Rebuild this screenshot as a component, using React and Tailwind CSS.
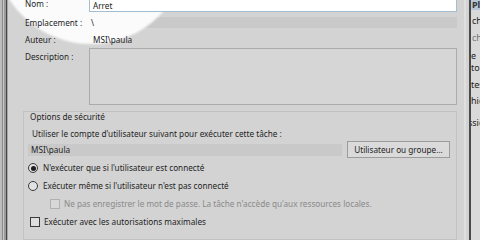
import React from 'react'

const font = { fontFamily: '"Noto Sans", "Open Sans", sans-serif' }

const Radio = ({ checked }) => (
  <span className="relative z-[2] w-[10px] h-[10px] rounded-full border border-[#3a3a3a] bg-[#e2e2e2] flex items-center justify-center shrink-0">
    {checked && <span className="w-[5px] h-[5px] rounded-full bg-[#1e1e1e]" />}
  </span>
)

const Check = ({ disabled }) => (
  <span
    className={
      'relative z-[2] w-[10px] h-[10px] border shrink-0 ' +
      (disabled ? 'border-[#b0b0b0] bg-[#d8d8d8]' : 'border-[#3a3a3a] bg-[#dedede]')
    }
  />
)

const Text = ({ children, className = '' }) => (
  <span className={'relative z-[2] whitespace-nowrap ' + className}>{children}</span>
)

const App = () => {
  return (
    <div
      style={font}
      className="relative w-[480px] h-[240px] overflow-hidden bg-[#d3d3d3] text-[8.2px] leading-[10px] text-[#242424] flex"
    >
      {/* spotlight */}
      <div className="absolute z-[1] left-[-6px] top-[-150px] w-[194px] h-[194px] rounded-full bg-[#fbfbfb] blur-[1px]" />

      {/* left window border */}
      <div className="flex h-full shrink-0">
        <div className="w-[2px] bg-[#bdbdbd]" />
        <div className="w-[1px] bg-[#8a8a8a]" />
        <div className="w-[1px] bg-[#c8c8c8]" />
        <div className="w-[2px] bg-[#9a9a9a]" />
        <div className="w-[1px] bg-[#454545]" />
        <div className="w-[1px] bg-[#a8a8a8]" />
      </div>

      {/* dialog body */}
      <div className="flex flex-col w-[454px] shrink-0 mt-[-4px]">
        <div className="flex items-center h-[16px] ml-[17px]">
          <Text className="w-[64px]">Nom :</Text>
          <div className="relative z-[2] w-[368px] h-[16px] bg-white border border-[#a3bed3] flex items-center pl-[3px] pt-[4px]">
            Arret
          </div>
        </div>

        <div className="flex items-center h-[11px] ml-[17px] mt-[5px]">
          <Text className="w-[64px]">Emplacement :</Text>
          <div className="w-[368px] h-[11px] bg-[#c9c9c9] flex items-center pl-[2px]">
            <Text>\</Text>
          </div>
        </div>

        <div className="flex items-center h-[12px] ml-[17px] mt-[6px]">
          <Text className="w-[68px]">Auteur :</Text>
          <Text>MSI\paula</Text>
        </div>

        <div className="flex ml-[17px] mt-[3px]">
          <Text className="w-[64px] pt-[4px]">Description :</Text>
          <div className="w-[368px] h-[57px] border border-[#ababab] bg-[#d6d6d6]" />
        </div>

        <div className="ml-[15px] mt-[6px] w-[434px] h-[140px] border border-[#c2c2c2] flex flex-col">
          <Text className="ml-[6px]">Options de sécurité</Text>
          <Text className="ml-[8px] mt-[7px]">Utiliser le compte d'utilisateur suivant pour exécuter cette tâche :</Text>
          <div className="flex items-center mt-[2px]">
            <div className="ml-[4px] w-[314px] h-[12px] bg-[#c9c9c9] flex items-center pl-[3px]">
              <Text>MSI\paula</Text>
            </div>
            <div className="ml-[5px] w-[103px] h-[17px] bg-[#dadada] border border-[#9c9c9c] flex items-center justify-center">
              <Text>Utilisateur ou groupe...</Text>
            </div>
          </div>
          <div className="flex items-center gap-[5px] ml-[4px] mt-[4px] h-[12px]">
            <Radio checked />
            <Text>N'exécuter que si l'utilisateur est connecté</Text>
          </div>
          <div className="flex items-center gap-[5px] ml-[4px] mt-[6px] h-[12px]">
            <Radio />
            <Text>Exécuter même si l'utilisateur n'est pas connecté</Text>
          </div>
          <div className="flex items-center gap-[4px] ml-[26px] mt-[6px] h-[12px]">
            <Check disabled />
            <Text className="text-[#8a8a8a]">Ne pas enregistrer le mot de passe. La tâche n'accède qu'aux ressources locales.</Text>
          </div>
          <div className="flex items-center gap-[4px] ml-[6px] mt-[6px] h-[12px]">
            <Check />
            <Text>Exécuter avec les autorisations maximales</Text>
          </div>
        </div>
      </div>

      {/* gap before neighbouring window */}
      <div className="w-[2px] shrink-0" />
      <div className="w-[2px] shrink-0 bg-[#dfdfdf]" />
      <div className="w-[3px] shrink-0" />
      <div className="w-[2px] shrink-0 bg-[#4a4a4a]" />

      {/* neighbouring window, mostly off-screen */}
      <div className="flex-1 bg-[#d9d9d9] overflow-hidden text-[9px] leading-[12px] text-[#222] flex flex-col">
        <div className="bg-[#b6c6d6] h-[10px] flex items-center font-bold pl-[1px] text-[#333]">Planifier</div>
        <div className="pl-[1px] mt-[5px]">chaque</div>
        <div className="pl-[1px] mt-[5px] text-[#777]">chaque</div>
        <div className="mt-[6px]">e tous</div>
        <div className="mt-[5px]">tes</div>
        <div className="mt-[4px]">hier</div>
        <div className="mt-[10px] ml-[-3px]">ssion</div>
      </div>
    </div>
  )
}

export default App
